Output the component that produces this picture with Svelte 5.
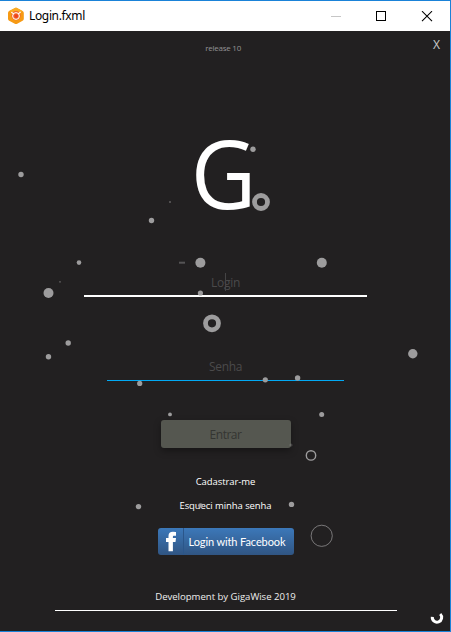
<script>
  const dots = [
    [21, 174.5, 2.7], [253, 149.3, 2.7], [151.5, 220.5, 2.7], [79, 262.6, 2.3],
    [48.5, 293, 5], [200.4, 262.7, 5], [321.8, 262.7, 5], [412.8, 353.7, 4.7],
    [200.4, 293, 2.6], [68.2, 343, 2.7], [48.5, 356.7, 2.7], [139.7, 383.4, 2.6],
    [265.3, 379.8, 2.6], [297.6, 378, 2.7], [170, 414.4, 1.9], [321.7, 414.4, 2.5],
    [138.5, 506.6, 2.7], [200.5, 505.5, 2.3], [291.5, 504.4, 2.7], [291, 445, 1.6, 0.3],
    [170, 202, 1, 0.5], [60, 281.8, 0.9, 0.5]
  ];
  const rings = [
    [261, 202, 6.5, 4.8], [212, 323.3, 6.5, 4.8], [311, 455.4, 4.7, 1.4], [321.7, 535.8, 10.6, 0.7]
  ];
</script>

<div class="window">
  <header>
    <svg class="logo" width="18" height="18" viewBox="0 0 18 18">
      <path d="M8 .9 Q9 .4 10 .9 L15.5 4 Q16.8 4.7 16.8 6 V11.7 Q16.8 13 15.6 13.7 L10.2 16.7 Q9 17.3 7.8 16.7 L2.2 13.7 Q1 13 1 11.7 V6 Q1 4.7 2.2 4Z" fill="#f69a14" />
      <path d="M2.2 4 L9 .6 L15.5 4 L9 9Z" fill="#fbac22" />
      <circle cx="9" cy="8.6" r="4.7" fill="#f26a2c" />
      <path d="M4.3 5.2L7 7M13.6 5L11 7.2" stroke="#fff" stroke-width="1.1" />
      <circle cx="9" cy="9" r="3.4" fill="none" stroke="#fff" stroke-width="1" />
      <circle cx="9.2" cy="9.1" r="1.8" fill="#ee3f22" />
    </svg>
    <span class="title">Login.fxml</span>
    <svg class="controls" width="103" height="12" viewBox="0 0 103 12">
      <path d="M0 5.5H10" stroke="#c6c6c6" />
      <rect x="45.5" y=".5" width="9" height="9" fill="none" stroke="#000" />
      <path d="M91 .2L101 10.2M101 .2L91 10.2" stroke="#000" stroke-width="1.1" fill="none" />
    </svg>
  </header>

  <main>
    <div class="top"><span class="release">release 10</span><span class="close">X</span></div>
    <div class="brand">G</div>
    <div class="field login"><span>Login</span></div>
    <div class="field senha"><span>Senha</span></div>
    <button class="enter"><span>Entrar</span></button>
    <div class="link first"><span>Cadastrar-me</span></div>
    <div class="link second"><span>Esqueci minha senha</span></div>
    <button class="facebook">
      <svg width="25" height="27" viewBox="0 0 25 27">
        <path d="M10.5 23.2V14H8V10.1H10.5V8C10.5 5.1 12.1 3.8 14.9 3.8Q16.8 3.8 18 4.1V7.7H16.2C15.1 7.7 14.9 8.2 14.9 9V10.1H18L17.5 14H14.9V23.2Z" fill="#fff" />
      </svg>
      <span class="fbtext">Login with Facebook</span>
    </button>
    <div class="credit"><span>Development by GigaWise 2019</span></div>
    <div class="bottom">
      <svg width="14" height="14" viewBox="0 0 14 14">
        <path d="M2.3 5.9A4.7 4.7 0 1 0 10.2 3" fill="none" stroke="#fff" stroke-width="3" />
      </svg>
    </div>
  </main>

  <svg class="particles" width="451" height="632" viewBox="0 0 451 632">
    {#each dots as [x, y, r, o = 1]}
      <circle cx={x} cy={y} {r} fill="#9d9c9d" opacity={o} />
    {/each}
    {#each rings as [x, y, r, w]}
      <circle cx={x} cy={y} {r} fill="none" stroke="#9d9c9d" stroke-width={w} />
    {/each}
    <path d="M179 262.7H185" stroke="#555455" stroke-width="2" />
    <path d="M225.5 273V291" stroke="#454445" />
  </svg>
</div>

<style>
  .window {
    position: relative;
    box-sizing: border-box;
    width: 451px;
    height: 632px;
    border: solid #1a82d8;
    border-width: 1px 1px 1px 0;
    background: #222021;
    font-family: "Open Sans", "Noto Sans", sans-serif;
    overflow: hidden;
  }
  header {
    height: 30px;
    display: flex;
    align-items: center;
    background: #fff;
    padding-left: 7px;
  }
  .logo { margin-top: -1px; }
  .title {
    margin-left: 4px;
    width: 302px;
    font: 12px/20px "Noto Sans", sans-serif;
    letter-spacing: -.35px;
    color: #000;
  }
  .controls { margin-top: 1px; }
  main {
    display: flex;
    flex-direction: column;
    align-items: center;
    width: 451px;
  }
  .top {
    display: flex;
    justify-content: flex-end;
    align-items: center;
    width: 100%;
    height: 28px;
    box-sizing: border-box;
    padding-right: 11px;
  }
  .release {
    font-size: 8px;
    line-height: 12px;
    margin: 5px 192px 0 0;
    color: #949394;
    white-space: nowrap;
    letter-spacing: -.25px;
  }
  .close { font: 12px/16px "Noto Sans", sans-serif; color: #c4c4c4; }
  .brand {
    height: 110px;
    margin-top: 58px;
    font-size: 95px;
    line-height: 110px;
    color: #fff;
    margin-right: 4px;
    transform: scaleX(.95);
  }
  .field {
    box-sizing: border-box;
    text-align: center;
    font-size: 12px;
    color: #4b4a4b;
    letter-spacing: -.25px;
  }
  .login {
    width: 283px;
    height: 28px;
    margin-top: 42px;
    line-height: 28px;
    border-bottom: 2px solid #fff;
  }
  .senha {
    width: 237px;
    height: 27px;
    margin-top: 57px;
    line-height: 26px;
    border-bottom: 1px solid #02a9f4;
    letter-spacing: -.35px;
  }
  button { border: 0; padding: 0; margin: 0; font-family: inherit; }
  .enter {
    width: 130px;
    height: 28px;
    margin-top: 39px;
    border-radius: 3px;
    background: #555750;
    color: #343532;
    font-size: 12px;
    line-height: 30px;
    letter-spacing: -.5px;
    box-shadow: 0 3px 7px rgba(0, 0, 0, .35);
  }
  .link { font-size: 9.5px; line-height: 16px; height: 16px; color: #fff; letter-spacing: -.08px; }
  .first { margin-top: 26px; }
  .second { margin-top: 8px; }
  .facebook {
    display: flex;
    width: 136px;
    height: 27px;
    margin-top: 14px;
    border-radius: 3px;
    background: linear-gradient(#3c78b9, #305583);
    color: #fff;
    overflow: hidden;
  }
  .facebook svg { border-right: 1px solid #2b568a; flex: none; }
  .fbtext {
    margin-left: 5px;
    font: 11px/27px Lato, sans-serif;
    letter-spacing: -.1px;
    white-space: nowrap;
  }
  .credit {
    width: 342px;
    height: 21px;
    margin-top: 34px;
    border-bottom: 1px solid #fff;
    text-align: center;
    font-size: 9.6px;
    line-height: 16px;
    letter-spacing: -.03px;
    color: #eee;
  }
  .bottom { align-self: flex-end; height: 20px; padding-right: 7px; margin-top: -3px; }
  .particles { position: absolute; left: 0; top: -1px; pointer-events: none; }
</style>
